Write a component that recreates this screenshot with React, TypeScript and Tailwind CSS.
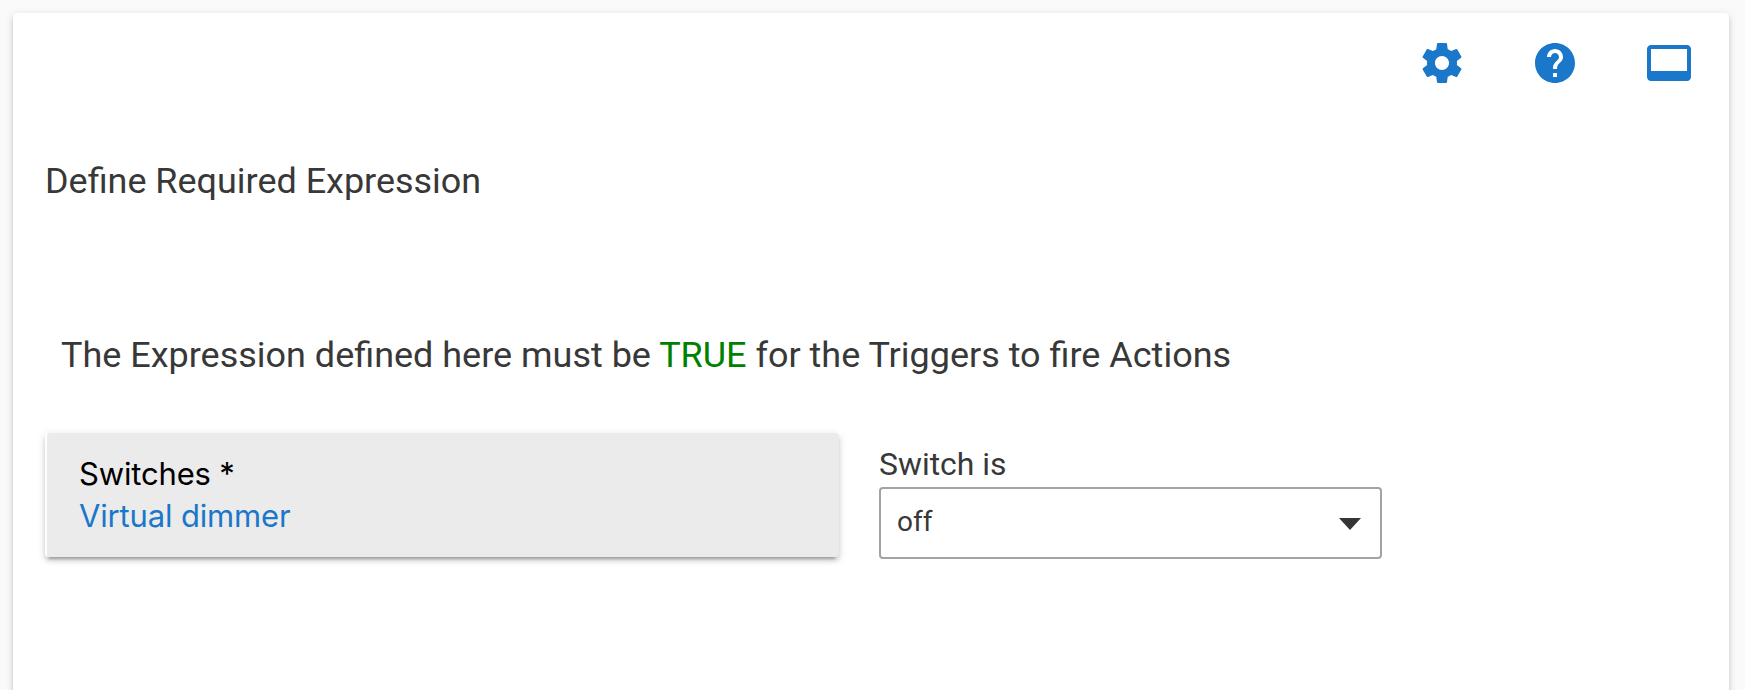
import React from 'react';

function SettingsIcon() {
  return (
    <svg viewBox="0 0 24 24" className="size-12 fill-current">
      <path d="M19.43 12.98c.04-.32.07-.64.07-.98s-.03-.66-.07-.98l2.11-1.65c.19-.15.24-.42.12-.64l-2-3.46c-.12-.22-.39-.3-.61-.22l-2.49 1c-.52-.4-1.08-.73-1.69-.98l-.38-2.65C14.46 2.18 14.25 2 14 2h-4c-.25 0-.46.18-.49.42l-.38 2.65c-.61.25-1.17.59-1.69.98l-2.49-1c-.23-.09-.49 0-.61.22l-2 3.46c-.13.22-.07.49.12.64l2.11 1.65c-.04.32-.07.65-.07.98s.03.66.07.98l-2.11 1.65c-.19.15-.24.42-.12.64l2 3.46c.12.22.39.3.61.22l2.49-1c.52.4 1.08.73 1.69.98l.38 2.65c.03.24.24.42.49.42h4c.25 0 .46-.18.49-.42l.38-2.65c.61-.25 1.17-.59 1.69-.98l2.49 1c.23.09.49 0 .61-.22l2-3.46c.12-.22.07-.49-.12-.64l-2.11-1.65zM12 15.5c-1.93 0-3.5-1.57-3.5-3.5s1.57-3.5 3.5-3.5 3.5 1.57 3.5 3.5-1.57 3.5-3.5 3.5z" />
    </svg>
  );
}

function HelpIcon() {
  return (
    <svg viewBox="0 0 24 24" className="size-12 fill-current">
      <path d="M12 2C6.48 2 2 6.48 2 12s4.48 10 10 10 10-4.48 10-10S17.52 2 12 2zm1 17h-2v-2h2v2zm2.07-7.75l-.9.92C13.45 12.9 13 13.5 13 15h-2v-.5c0-1.1.45-2.1 1.17-2.83l1.24-1.26c.37-.36.59-.86.59-1.41 0-1.1-.9-2-2-2s-2 .9-2 2H8c0-2.21 1.79-4 4-4s4 1.79 4 4c0 .88-.36 1.68-.93 2.25z" />
    </svg>
  );
}

function DisplayIcon() {
  return (
    <svg viewBox="0 0 24 24" className="size-12 fill-current">
      <path d="M21 3H3c-1.1 0-2 .9-2 2v14c0 1.1.9 2 2 2h18c1.1 0 2-.9 2-2V5c0-1.1-.9-2-2-2zm0 13H3V5h18v11z" />
    </svg>
  );
}

export default function App() {
  return (
    <div className="h-[690px] overflow-hidden bg-[#fafafa] px-[13px] pt-[13px] font-[Roboto,sans-serif] text-[#383838]">
      <main className="mr-[3px] h-[720px] rounded-[4px] bg-white pl-8 shadow-[0_4px_4px_0_rgba(0,0,0,0.14),0_6px_2px_-4px_rgba(0,0,0,0.2),0_2px_10px_0_rgba(0,0,0,0.12)]">
        <nav className="flex justify-end gap-[65px] pt-[26px] pr-9 text-[#1a77c9]">
          <button aria-label="Settings"><SettingsIcon /></button>
          <button aria-label="Help"><HelpIcon /></button>
          <button aria-label="Display" className="ml-px"><DisplayIcon /></button>
        </nav>

        <h1 className="mt-[70px] text-[35.95px] leading-[48px]">Define Required Expression</h1>
        <p className="mt-[126px] pl-4 text-[35.98px] leading-[48px]">
          The Expression defined here must be <span className="text-[#008000]">TRUE</span> for the Triggers to fire Actions
        </p>

        <div className="mt-[54px] flex items-start gap-10">
          <button className="h-[124px] w-[794px] rounded-[4px] border-l-2 border-white bg-[#ebebeb] pb-px pl-8 text-left font-[Inter,sans-serif] text-[31px] leading-[42px] tracking-[-0.16px] text-black shadow-[0_4px_4px_0_rgba(0,0,0,0.14),0_6px_2px_-4px_rgba(0,0,0,0.2),0_2px_10px_0_rgba(0,0,0,0.12)]">
            <span className="block">Switches *</span>
            <span className="block text-[#1a77c9]">Virtual dimmer</span>
          </button>

          <div className="pt-[10px]">
            <label className="block text-[31.9px] leading-[43px]">Switch is</label>
            <div className="mt-px flex h-[72px] w-[503px] items-center justify-between rounded-[4px] border-2 border-[#a3a3a3] pr-[19px] pl-4 text-[28px]">
              <span className="pb-0.5">off</span>
              <svg viewBox="0 0 22 12" className="mt-0.5 h-3 w-[22px] fill-[#353535]">
                <path d="M0 0h22L11 12z" />
              </svg>
            </div>
          </div>
        </div>
      </main>
    </div>
  );
}
